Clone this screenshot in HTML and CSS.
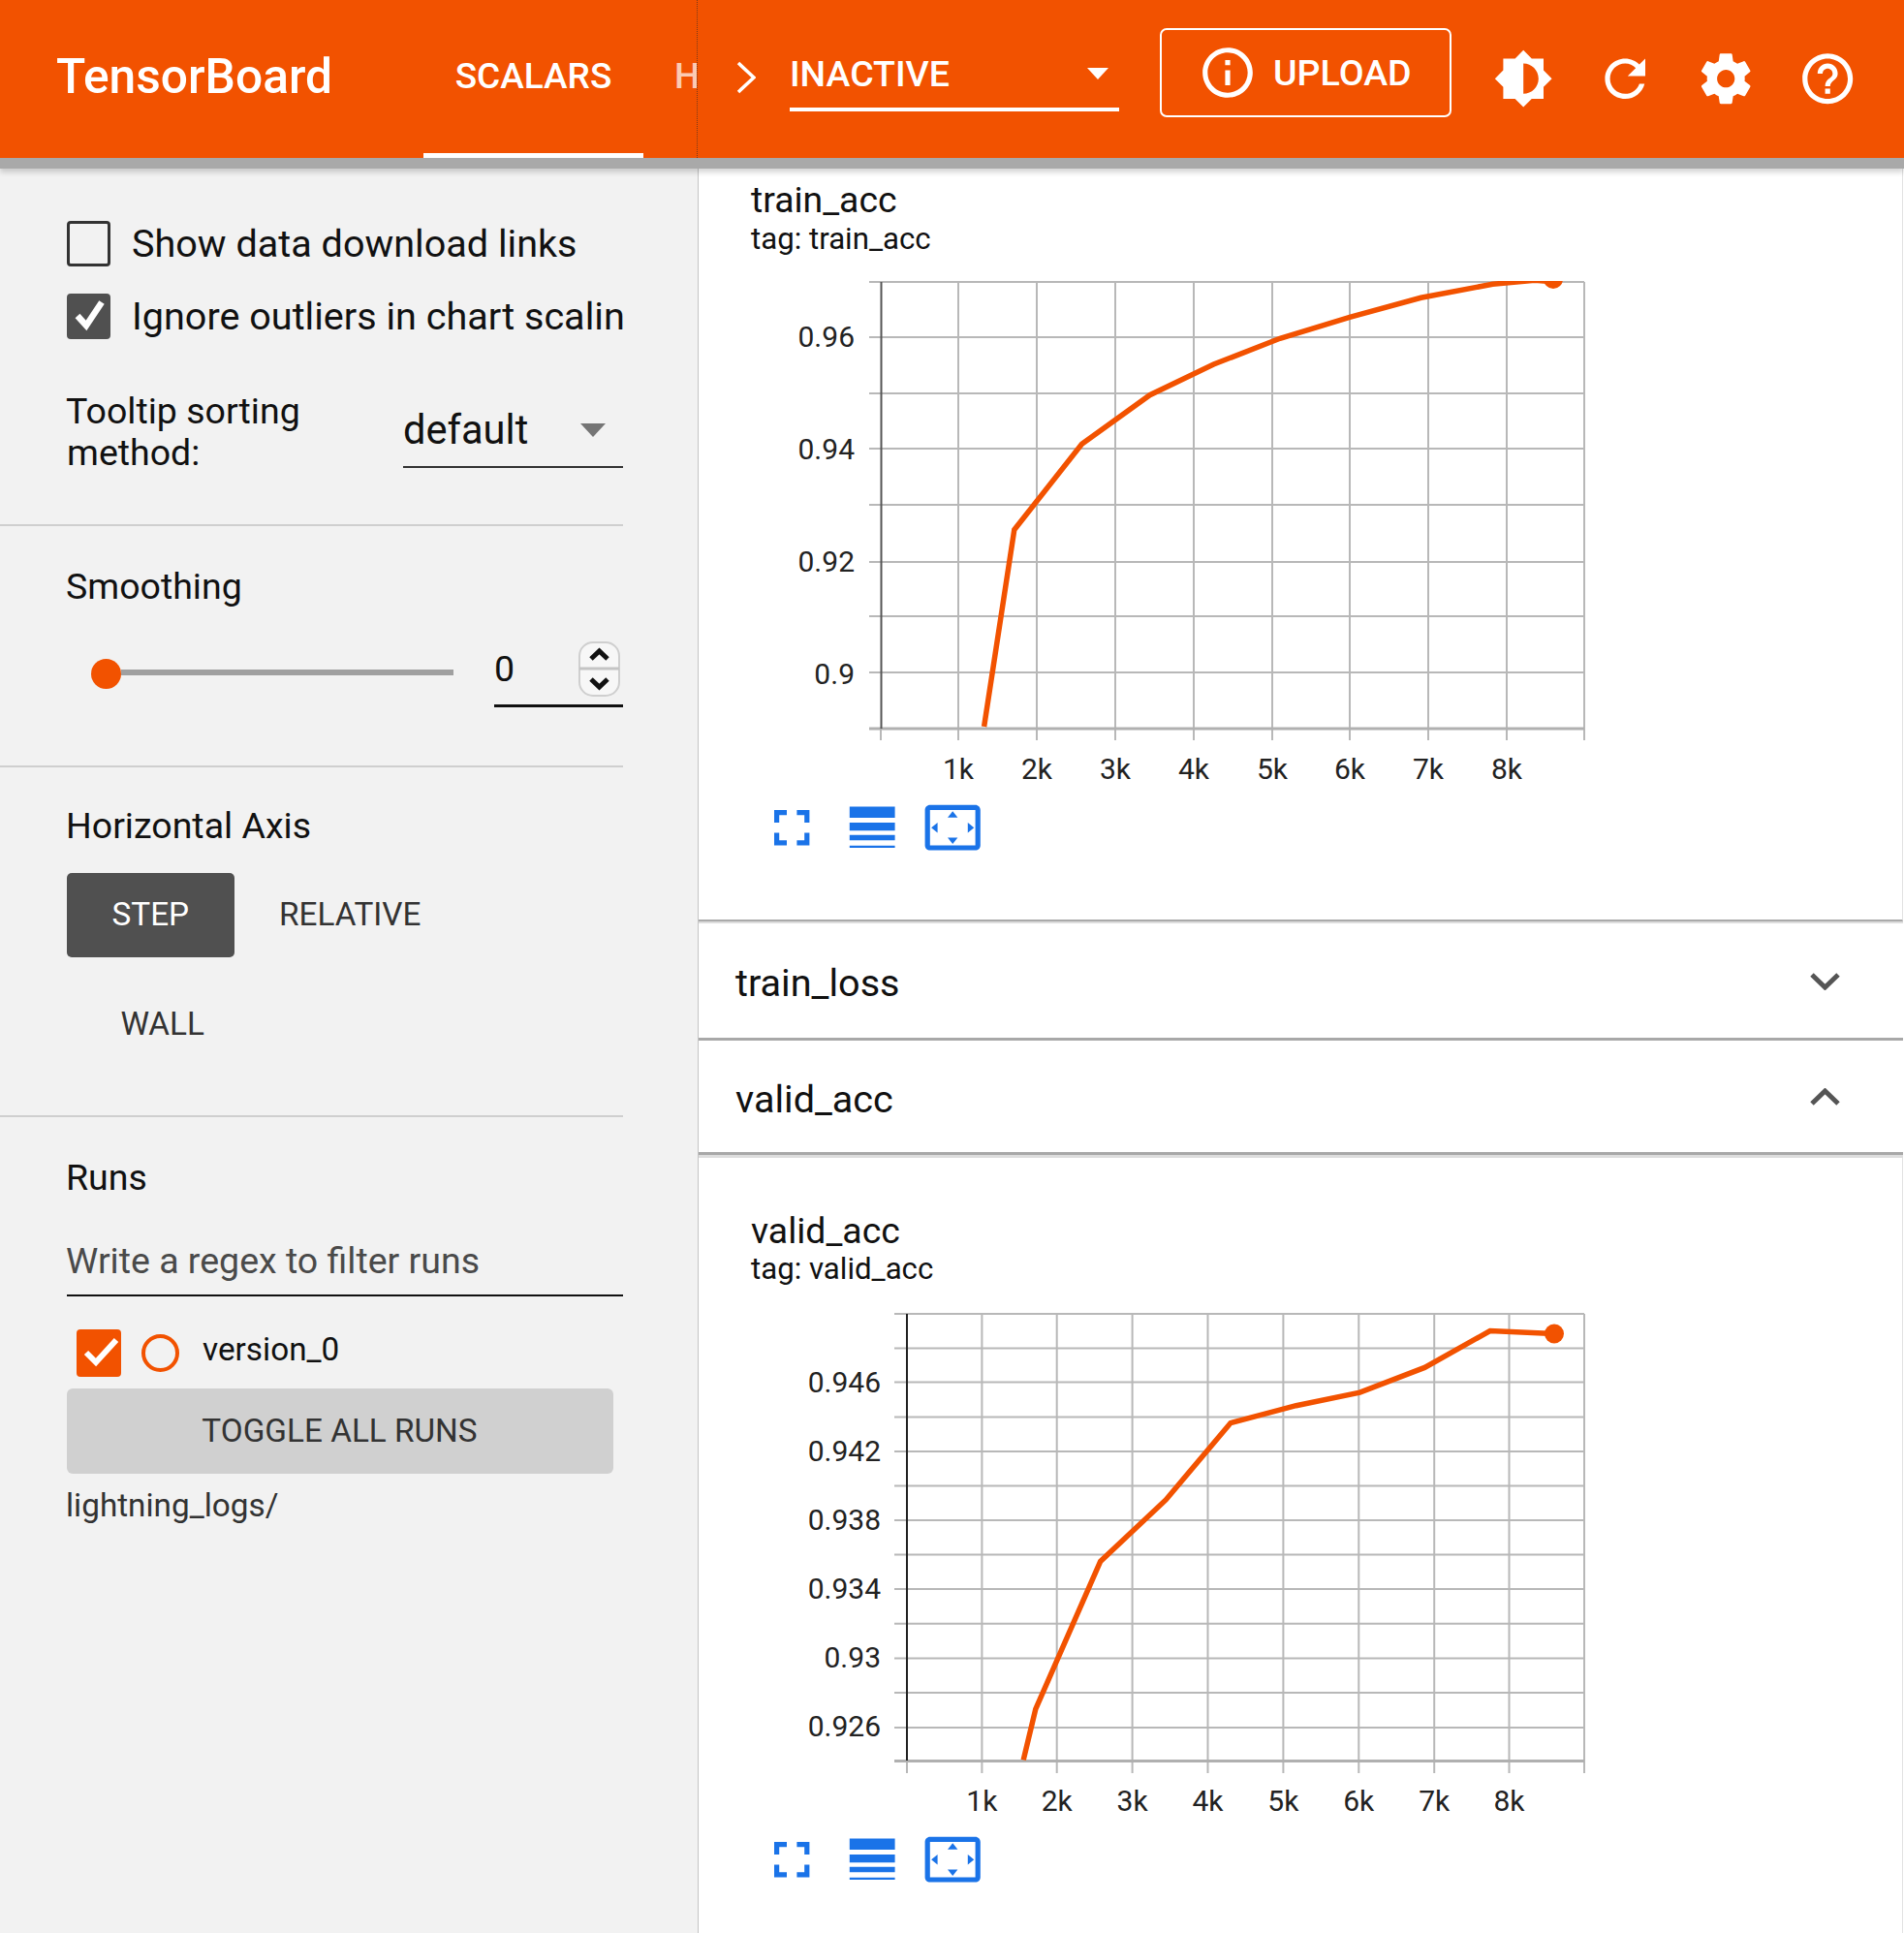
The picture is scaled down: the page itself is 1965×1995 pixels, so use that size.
FILE: index.html
```html
<!DOCTYPE html>
<html lang="en">
<head>
  <meta charset="UTF-8">
  <title>TensorBoard</title>
  <link rel="stylesheet" href="styles.css">
</head>
<body>

<header class="toolbar">
  <div class="toolbar-left">
    <div class="logo">TensorBoard</div>
    <div class="tab tab-active">SCALARS</div>
    <div class="tab tab-next">HISTOGRAMS</div>
  </div>
  <div class="toolbar-right">
    <svg class="nav-chevron" viewBox="0 0 20 34"><path d="M2 2 L18 17 L2 32"/></svg>
    <div class="run-select">
      <span>INACTIVE</span>
      <span class="caret-white"></span>
    </div>
    <div class="upload-btn">
      <svg class="upload-icon" viewBox="0 0 24 24"><path d="M11 7h2v2h-2zm0 4h2v6h-2zm1-9C6.48 2 2 6.48 2 12s4.48 10 10 10 10-4.48 10-10S17.52 2 12 2zm0 18c-4.41 0-8-3.59-8-8s3.59-8 8-8 8 3.59 8 8-3.59 8-8 8z"/></svg>
      <span>UPLOAD</span>
    </div>
    <div class="icon-btns">
      <div class="icon-btn"><svg viewBox="0 0 24 24"><path d="M20 15.31L23.31 12 20 8.69V4h-4.69L12 .69 8.69 4H4v4.69L.69 12 4 15.31V20h4.69L12 23.31 15.31 20H20v-4.69zM12 18V6c3.31 0 6 2.69 6 6s-2.69 6-6 6z"/></svg></div>
      <div class="icon-btn"><svg viewBox="0 0 24 24"><path d="M17.65 6.35C16.2 4.9 14.21 4 12 4c-4.42 0-7.99 3.58-7.99 8s3.57 8 7.99 8c3.73 0 6.84-2.55 7.73-6h-2.08c-.82 2.33-3.04 4-5.65 4-3.31 0-6-2.69-6-6s2.69-6 6-6c1.66 0 3.14.69 4.22 1.78L13 11h7V4l-2.35 2.35z"/></svg></div>
      <div class="icon-btn"><svg viewBox="0 0 24 24"><path d="M19.43 12.98c.04-.32.07-.64.07-.98s-.03-.66-.07-.98l2.11-1.65c.19-.15.24-.42.12-.64l-2-3.46c-.12-.22-.39-.3-.61-.22l-2.49 1c-.52-.4-1.08-.73-1.69-.98l-.38-2.65C14.46 2.18 14.25 2 14 2h-4c-.25 0-.46.18-.49.42l-.38 2.65c-.61.25-1.17.59-1.69.98l-2.49-1c-.23-.09-.49 0-.61.22l-2 3.46c-.13.22-.07.49.12.64l2.11 1.65c-.04.32-.07.65-.07.98s.03.66.07.98l-2.11 1.65c-.19.15-.24.42-.12.64l2 3.46c.12.22.39.3.61.22l2.49-1c.52.4 1.08.73 1.69.98l.38 2.65c.03.24.24.42.49.42h4c.25 0 .46-.18.49-.42l.38-2.65c.61-.25 1.17-.59 1.69-.98l2.49 1c.23.09.49 0 .61-.22l2-3.46c.12-.22.07-.49-.12-.64l-2.11-1.65zM12 15.5c-1.93 0-3.5-1.57-3.5-3.5s1.57-3.5 3.5-3.5 3.5 1.57 3.5 3.5-1.57 3.5-3.5 3.5z"/></svg></div>
      <div class="icon-btn"><svg viewBox="0 0 24 24"><path d="M11 18h2v-2h-2v2zm1-16C6.48 2 2 6.48 2 12s4.48 10 10 10 10-4.48 10-10S17.52 2 12 2zm0 18c-4.41 0-8-3.59-8-8s3.59-8 8-8 8 3.59 8 8-3.59 8-8 8zm0-14c-2.21 0-4 1.79-4 4h2c0-1.1.9-2 2-2s2 .9 2 2c0 2-3 1.75-3 5h2c0-2.25 3-2.5 3-5 0-2.21-1.79-4-4-4z"/></svg></div>
    </div>
  </div>
</header>

<div class="page">
  <aside class="sidebar">

    <section class="section section-options">
      <div class="check-row">
        <span class="checkbox"></span>
        <span class="check-label">Show data download links</span>
      </div>
      <div class="check-row check-row-second">
        <span class="checkbox checkbox-on">
          <svg viewBox="0 0 39 41"><path d="M8 20 L17 30 L33 6"/></svg>
        </span>
        <span class="check-label">Ignore outliers in chart scaling</span>
      </div>
      <div class="tooltip-row">
        <div class="tooltip-label">Tooltip sorting method:</div>
        <div class="tooltip-select">
          <span>default</span>
          <span class="caret-grey"></span>
        </div>
      </div>
    </section>

    <section class="section section-smoothing">
      <div class="section-title">Smoothing</div>
      <div class="slider-row">
        <div class="slider">
          <span class="slider-knob"></span>
          <span class="slider-track"></span>
        </div>
        <div class="slider-value">
          <span>0</span>
          <svg class="spinner" viewBox="0 0 43 57">
            <rect x="1" y="1" width="41" height="55" rx="14"/>
            <path class="spinner-line" d="M1 28 H42"/>
            <path class="spinner-arrow" d="M13 18 L21.5 10 L30 18"/>
            <path class="spinner-arrow" d="M13 39 L21.5 47 L30 39"/>
          </svg>
        </div>
      </div>
    </section>

    <section class="section section-axis">
      <div class="section-title">Horizontal Axis</div>
      <div class="axis-buttons">
        <div class="axis-btn axis-btn-on">STEP</div>
        <div class="axis-btn">RELATIVE</div>
        <div class="axis-btn axis-btn-wall">WALL</div>
      </div>
    </section>

    <section class="section section-runs">
      <div class="section-title">Runs</div>
      <div class="runs-filter">Write a regex to filter runs</div>
      <div class="run-row">
        <span class="run-check">
          <svg viewBox="0 0 46 49"><path d="M10 24 L20 34 L41 11"/></svg>
        </span>
        <span class="run-radio"></span>
        <span class="run-name">version_0</span>
      </div>
      <div class="toggle-btn">TOGGLE ALL RUNS</div>
      <div class="log-dir">lightning_logs/</div>
    </section>
  </aside>

  <main class="content">

    <div class="card card-first">
      <div class="chart-title">train_acc</div>
      <div class="chart-tag">tag: train_acc</div>
      <svg class="chart" viewBox="800 280 860 530">
        <path class="grid" d="M989 291V764M1070 291V764M1151 291V764M1232 291V764M1313 291V764M1393 291V764M1474 291V764M1555 291V764M1635 291V764M909 752V764"/>
        <path class="grid" d="M897 291H1635M897 348H1635M897 406H1635M897 463H1635M897 521H1635M897 580H1635M897 636H1635M897 694H1635"/>
        <path class="grid-base" d="M897 752H1635"/>
        <path class="axis-y axis-soft" d="M909.5 291V752"/>
        <g class="tick-y">
          <text x="882" y="358">0.96</text>
          <text x="882" y="474">0.94</text>
          <text x="882" y="590">0.92</text>
          <text x="882" y="706">0.9</text>
        </g>
        <g class="tick-x">
          <text x="989" y="804">1k</text>
          <text x="1070" y="804">2k</text>
          <text x="1151" y="804">3k</text>
          <text x="1232" y="804">4k</text>
          <text x="1313" y="804">5k</text>
          <text x="1393" y="804">6k</text>
          <text x="1474" y="804">7k</text>
          <text x="1555" y="804">8k</text>
        </g>
        <clipPath id="plotA"><rect x="909" y="290" width="726" height="462"/></clipPath>
        <g clip-path="url(#plotA)">
          <polyline class="series" points="1015.6,750 1046.8,546.7 1116.5,458.3 1186.7,407.7 1252.5,376 1321,349.3 1393,327.3 1466.5,307.3 1540.5,293.3 1584,289.3 1602.5,290.7"/>
          <circle class="series-dot" cx="1603" cy="288" r="10"/>
        </g>
      </svg>
      <div class="chart-actions">
        <div class="chart-action"><svg viewBox="0 0 24 24"><path d="M7 14H5v5h5v-2H7v-3zm-2-4h2V7h3V5H5v5zm12 7h-3v2h5v-5h-2v3zM14 5v2h3v3h2V5h-5z"/></svg></div>
        <div class="chart-action"><svg viewBox="0 0 24 24"><path d="M3 3.7h18v4.4H3zM3 10h18v3.2H3zM3 14.9h18V17H3zM3 19.1h18v.9H3z"/></svg></div>
        <div class="chart-action"><svg viewBox="0 0 24 24"><path d="M12.01 5.5L10 8h4l-1.99-2.5zM18 10v4l2.5-1.99L18 10zM6 10l-2.5 2.01L6 14v-4zm8 6h-4l2.01 2.5L14 16zm7-13H3c-1.1 0-2 .9-2 2v14c0 1.1.9 2 2 2h18c1.1 0 2-.9 2-2V5c0-1.1-.9-2-2-2zm0 16.01H3V4.99h18v14.02z"/></svg></div>
      </div>
    </div>

    <div class="group-row group-row-loss">
      <span>train_loss</span>
      <svg class="group-chevron" viewBox="0 0 31 19"><path d="M2 3 L15.5 16 L29 3"/></svg>
    </div>
    <div class="group-row group-row-valid">
      <span>valid_acc</span>
      <svg class="group-chevron" viewBox="0 0 31 19"><path d="M2 16 L15.5 3 L29 16"/></svg>
    </div>

    <div class="card card-second">
      <div class="chart-title">valid_acc</div>
      <div class="chart-tag">tag: valid_acc</div>
      <svg class="chart" viewBox="800 1340 860 530">
        <path class="grid" d="M1013.4 1356V1830M1090.7 1356V1830M1168.6 1356V1830M1246.5 1356V1830M1324.4 1356V1830M1402.3 1356V1830M1480.2 1356V1830M1557.5 1356V1830M1635 1356V1830M936 1817V1830"/>
        <path class="grid" d="M923 1356H1635M923 1391.4H1635M923 1426.4H1635M923 1462.5H1635M923 1498H1635M923 1533.6H1635M923 1569H1635M923 1604.6H1635M923 1640H1635M923 1675.7H1635M923 1711.4H1635M923 1747H1635M923 1783H1635"/>
        <path class="grid-base" d="M923 1817.5H1635"/>
        <path class="axis-y" d="M936 1356V1817"/>
        <g class="tick-y">
          <text x="909" y="1437">0.946</text>
          <text x="909" y="1508">0.942</text>
          <text x="909" y="1579">0.938</text>
          <text x="909" y="1650">0.934</text>
          <text x="909" y="1721">0.93</text>
          <text x="909" y="1792">0.926</text>
        </g>
        <g class="tick-x">
          <text x="1013.4" y="1869">1k</text>
          <text x="1090.7" y="1869">2k</text>
          <text x="1168.6" y="1869">3k</text>
          <text x="1246.5" y="1869">4k</text>
          <text x="1324.4" y="1869">5k</text>
          <text x="1402.3" y="1869">6k</text>
          <text x="1480.2" y="1869">7k</text>
          <text x="1557.5" y="1869">8k</text>
        </g>
        <polyline class="series" points="1056.2,1816.4 1068.8,1763.9 1135.7,1611.4 1203.2,1547.9 1270,1468.6 1337.6,1450.7 1403.4,1437.1 1470.3,1411.4 1537.8,1373.6 1603.6,1376.4"/>
        <circle class="series-dot" cx="1604" cy="1376.5" r="10"/>
      </svg>
      <div class="chart-actions">
        <div class="chart-action"><svg viewBox="0 0 24 24"><path d="M7 14H5v5h5v-2H7v-3zm-2-4h2V7h3V5H5v5zm12 7h-3v2h5v-5h-2v3zM14 5v2h3v3h2V5h-5z"/></svg></div>
        <div class="chart-action"><svg viewBox="0 0 24 24"><path d="M3 3.7h18v4.4H3zM3 10h18v3.2H3zM3 14.9h18V17H3zM3 19.1h18v.9H3z"/></svg></div>
        <div class="chart-action"><svg viewBox="0 0 24 24"><path d="M12.01 5.5L10 8h4l-1.99-2.5zM18 10v4l2.5-1.99L18 10zM6 10l-2.5 2.01L6 14v-4zm8 6h-4l2.01 2.5L14 16zm7-13H3c-1.1 0-2 .9-2 2v14c0 1.1.9 2 2 2h18c1.1 0 2-.9 2-2V5c0-1.1-.9-2-2-2zm0 16.01H3V4.99h18v14.02z"/></svg></div>
      </div>
    </div>
  </main>
</div>

</body>
</html>
```

FILE: styles.css
```css
html, body {
  margin: 0;
  padding: 0;
  height: 1995px;
  overflow: hidden;
}
body {
  font-family: Roboto, "Liberation Sans", sans-serif;
  background-color: #fff;
  color: #111;
}

/* top bar */
.toolbar {
  position: relative;
  z-index: 2;
  display: flex;
  height: 163px;
  background-color: #f25200;
  color: #fff;
  box-shadow: 0 11px 0 #a9a9a9, 0 15px 5px rgba(0, 0, 0, 0.16);
}
.toolbar-left {
  display: flex;
  width: 720px;
  height: 163px;
  flex: none;
  overflow: hidden;
  border-right: 1px dotted #7a3a1a;
  box-sizing: border-box;
}
.logo {
  margin: 49px 0 0 58px;
  width: 379px;
  flex: none;
  font-size: 49.7px;
  font-weight: 500;
  line-height: 60px;
}
.tab {
  flex: none;
  height: 163px;
  box-sizing: border-box;
  padding-top: 56px;
  font-size: 37px;
  font-weight: 500;
  line-height: 46px;
  text-align: center;
}
.tab-active {
  width: 227px;
  border-bottom: 5px solid #fff;
}
.tab-next {
  margin-left: 32px;
  opacity: 0.7;
}
.toolbar-right {
  display: flex;
  flex: 1;
  min-width: 0;
}
.nav-chevron {
  width: 20px;
  height: 34px;
  margin: 63px 0 0 40px;
  flex: none;
  fill: none;
  stroke: #fff;
  stroke-width: 3.5;
}
.run-select {
  display: flex;
  justify-content: space-between;
  align-items: center;
  width: 329px;
  height: 52px;
  margin: 50px 0 0 35px;
  padding-right: 11px;
  padding-bottom: 9px;
  border-bottom: 4px solid #fff;
  font-size: 37.5px;
  font-weight: 500;
}
.caret-white {
  width: 0;
  height: 0;
  border-left: 11px solid transparent;
  border-right: 11px solid transparent;
  border-top: 12px solid #fff;
}
.upload-btn {
  display: flex;
  align-items: center;
  width: 301px;
  height: 92px;
  margin: 29px 0 0 42px;
  padding-left: 37px;
  box-sizing: border-box;
  border: 2px solid #fff;
  border-radius: 7px;
  font-size: 37.6px;
  font-weight: 500;
}
.upload-btn span {
  margin: 0 0 0 16px;
}
.upload-icon {
  width: 62px;
  height: 62px;
  fill: #fff;
}
.icon-btns {
  display: flex;
  margin-left: 22px;
}
.icon-btn {
  display: flex;
  justify-content: center;
  width: 104.6px;
  padding-top: 50px;
}
.icon-btn svg {
  width: 62.4px;
  height: 62.4px;
  fill: #fff;
}

/* page columns */
.page {
  display: flex;
  height: 1832px;
}
.sidebar {
  width: 721px;
  flex: none;
  box-sizing: border-box;
  background-color: #f2f2f2;
  border-right: 1px solid #c4c4c4;
}
.section {
  width: 643px;
  box-sizing: border-box;
  padding-left: 69px;
  border-bottom: 2px solid #cfcfcf;
  font-size: 37.5px;
  text-indent: -1px;
}
.section-options {
  height: 380px;
  padding-top: 65px;
}
.section-smoothing { height: 249px; }
.section-axis { height: 361px; }
.section-runs { border-bottom: none; }
.section-title {
  line-height: 43px;
}

/* checkboxes */
.check-row {
  display: flex;
  align-items: center;
  height: 47px;
  white-space: nowrap;
  overflow: hidden;
}
.check-row-second { margin-top: 28px; }
.checkbox {
  width: 45px;
  height: 47px;
  flex: none;
  box-sizing: border-box;
  border: 3px solid #333;
  border-radius: 4px;
}
.checkbox-on {
  background-color: #505050;
  border-color: #505050;
}
.checkbox svg {
  display: block;
  width: 39px;
  height: 41px;
  fill: none;
  stroke: #fff;
  stroke-width: 6.5;
}
.check-label {
  margin-left: 22px;
  font-size: 39.6px;
  text-indent: 0;
}
.tooltip-row {
  display: flex;
  margin-top: 53px;
}
.tooltip-label {
  width: 347px;
  flex: none;
  box-sizing: border-box;
  padding-right: 100px;
  line-height: 43px;
}
.tooltip-select {
  display: flex;
  justify-content: space-between;
  align-items: center;
  width: 227px;
  height: 80px;
  box-sizing: border-box;
  padding: 20px 18px 18px 0;
  border-bottom: 2px solid #333;
  font-size: 41.6px;
  text-indent: 0;
}
.caret-grey {
  width: 0;
  height: 0;
  margin-top: 2px;
  border-left: 13px solid transparent;
  border-right: 13px solid transparent;
  border-top: 14px solid #757575;
}

/* smoothing */
.section-smoothing {
  padding-top: 41px;
}
.slider-row {
  display: flex;
  height: 69px;
  margin-top: 34px;
}
.slider {
  display: flex;
  align-items: center;
  width: 374px;
  margin-left: 25px;
  flex: none;
}
.slider-knob {
  width: 31px;
  height: 31px;
  flex: none;
  border-radius: 50%;
  background-color: #f25200;
}
.slider-track {
  flex: 1;
  height: 6px;
  margin-bottom: 3px;
  background-color: #a0a0a0;
}
.slider-value {
  display: flex;
  justify-content: space-between;
  align-items: center;
  width: 133px;
  margin-left: 42px;
  flex: none;
  box-sizing: border-box;
  padding-bottom: 8px;
  border-bottom: 3px solid #111;
  text-indent: 0;
}
.spinner {
  width: 43px;
  height: 57px;
  margin-right: 3px;
  fill: #f7f7f7;
  stroke: #cfcfcf;
  stroke-width: 2;
}
.spinner .spinner-line {
  fill: none;
  stroke: #c4c4c4;
  stroke-width: 3;
}
.spinner .spinner-arrow {
  fill: none;
  stroke: #111;
  stroke-width: 5;
}

/* axis buttons */
.section-axis {
  padding-top: 39px;
}
.axis-buttons {
  display: flex;
  flex-wrap: wrap;
  row-gap: 25px;
  margin-top: 27px;
}
.axis-btn {
  height: 87px;
  line-height: 85px;
  padding: 0 46.5px;
  font-size: 33.3px;
  color: #333;
  text-indent: 0;
}
.axis-btn-on {
  background-color: #505050;
  color: #fff;
  border-radius: 5px;
}
.axis-btn-wall {
  margin-left: 9px;
  line-height: 87px;
}

/* runs */
.section-runs {
  padding-top: 41px;
}
.runs-filter {
  margin-top: 43px;
  padding-bottom: 13px;
  line-height: 43px;
  border-bottom: 2px solid #111;
  color: #4a4a4a;
}
.run-row {
  display: flex;
  margin-top: 34px;
  height: 49px;
}
.run-check {
  width: 46px;
  height: 49px;
  margin-left: 10px;
  flex: none;
  background-color: #f25200;
  border-radius: 4px;
  text-indent: 0;
}
.run-check svg {
  display: block;
  width: 46px;
  height: 49px;
  fill: none;
  stroke: #fff;
  stroke-width: 6;
}
.run-radio {
  width: 39px;
  height: 39px;
  margin: 5px 0 0 21px;
  flex: none;
  box-sizing: border-box;
  border: 4px solid #f25200;
  border-radius: 50%;
}
.run-name {
  margin-left: 24px;
  font-size: 33.3px;
  line-height: 42px;
  text-indent: 0;
}
.toggle-btn {
  width: 564px;
  height: 88px;
  margin-top: 12px;
  border-radius: 6px;
  background-color: #d0d0d0;
  color: #333;
  font-size: 33.3px;
  line-height: 88px;
  text-align: center;
}
.log-dir {
  margin-top: 11px;
  font-size: 33.3px;
  line-height: 43px;
  color: #333;
}

/* main column */
.content {
  flex: 1;
  min-width: 0;
  padding-right: 1px;
}
.card {
  box-sizing: border-box;
  background-color: #fff;
  border-right: 1px solid #e2e2e2;
  padding-left: 54px;
}
.card-first {
  height: 788px;
  padding-top: 21px;
  border-bottom: 2px solid #aaa;
  box-shadow: 0 2px 0 #ddd;
}
.card-second {
  height: 803px;
  padding-top: 56px;
}
.chart-title {
  font-size: 37.4px;
  line-height: 44px;
}
.chart-tag {
  font-size: 31.2px;
  line-height: 36px;
}
.card-first .chart-tag { padding-top: 1px; }
.chart {
  display: block;
  width: 860px;
  height: 530px;
  margin-left: 25px;
}
.card-first .chart { margin-top: 15px; }
.card-second .chart { margin-top: 12px; }
.grid {
  fill: none;
  stroke: #b8b8b8;
  stroke-width: 2;
}
.grid-base {
  fill: none;
  stroke: #b0b0b0;
  stroke-width: 3;
}
.axis-y {
  fill: none;
  stroke: #222;
  stroke-width: 2;
}
.axis-soft {
  stroke: #555;
}
.tick-y text, .tick-x text {
  font-size: 30px;
  fill: #222;
}
.tick-y text { text-anchor: end; }
.tick-x text { text-anchor: middle; }
.series {
  fill: none;
  stroke: #f25200;
  stroke-width: 5.5;
}
.series-dot {
  fill: #f25200;
}
.chart-actions {
  display: flex;
}
.card-first .chart-actions { margin-top: 13px; }
.card-second .chart-actions { margin-top: 18px; }
.chart-action {
  display: flex;
  justify-content: center;
  width: 83.4px;
}
.chart-action svg {
  width: 62.4px;
  height: 62.4px;
  fill: #1a73e8;
}

/* collapsed groups */
.group-row {
  display: flex;
  justify-content: space-between;
  align-items: center;
  box-sizing: border-box;
  padding-left: 38px;
  padding-right: 65px;
  font-size: 39.6px;
  background-color: #fff;
}
.group-row-loss {
  height: 121px;
  margin-top: 2px;
  padding-top: 5px;
  border-bottom: 3px solid #a8a8a8;
}
.group-row-valid {
  height: 118px;
  padding-top: 5px;
  border-bottom: 3px solid #a8a8a8;
  box-shadow: 0 3px 0 #ddd;
  position: relative;
}
.group-chevron {
  width: 31px;
  height: 19px;
  margin-bottom: 4px;
  fill: none;
  stroke: #555;
  stroke-width: 5;
}
```
